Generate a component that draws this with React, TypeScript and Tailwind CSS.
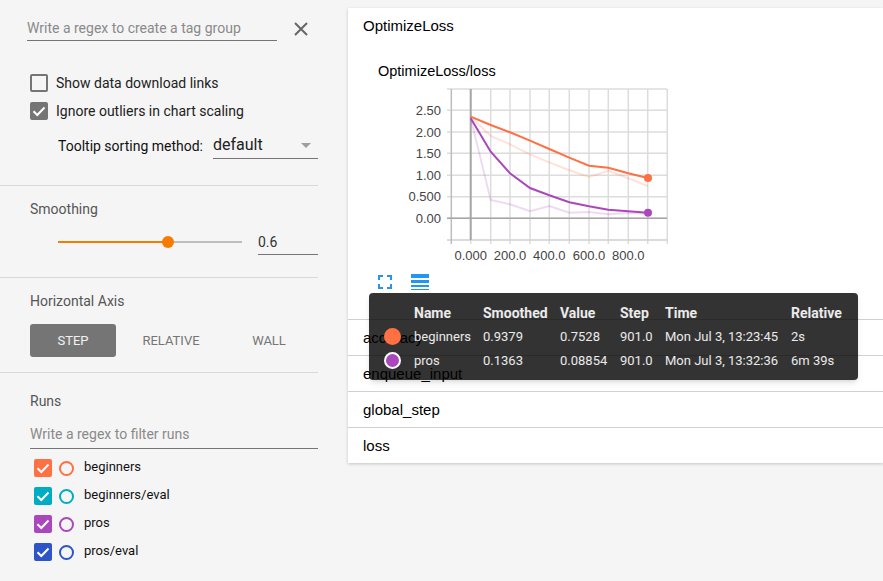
import React from 'react';

const xs = [470.7, 490.7, 510, 530, 549.3, 569.3, 589, 608.3, 628.3, 647.7];
const series = {
  smoothOrange: [116.7, 125, 132.3, 140.7, 149, 157.7, 165.7, 167.7, 173.3, 178],
  smoothPurple: [118.3, 151.7, 173.3, 188, 195.3, 202.3, 206.3, 209.7, 211.3, 212.7],
  rawOrange: [116.7, 136, 144.3, 154.3, 162.3, 170.3, 177, 170.7, 178.3, 186],
  rawPurple: [118.3, 200, 204.3, 211.3, 206, 212.7, 212, 214.3, 213, 213.7],
};

const pts = (ys: number[]) => ys.map((y, i) => `${xs[i]},${y}`).join(' ');

const yTicks = [
  { y: 110.3, label: '2.50' },
  { y: 132, label: '2.00' },
  { y: 153.3, label: '1.50' },
  { y: 175.3, label: '1.00' },
  { y: 196.7, label: '0.500' },
  { y: 218.3, label: '0.00' },
];
const xLabels = [
  { x: 470.7, label: '0.000' },
  { x: 510, label: '200.0' },
  { x: 549.3, label: '400.0' },
  { x: 589, label: '600.0' },
  { x: 628.3, label: '800.0' },
];

function Chart() {
  return (
    <svg width="280" height="177" viewBox="390 85 280 177" className="block" style={{ fontFamily: '"Liberation Sans", sans-serif' }}>
      {xs.map((x) => (
        <line key={x} x1={x} y1={89} x2={x} y2={244} stroke="#dcdcdc" strokeWidth="1.5" />
      ))}
      <line x1={667.3} y1={89} x2={667.3} y2={244} stroke="#dcdcdc" strokeWidth="1.5" />
      <line x1={447} y1={89} x2={667} y2={89} stroke="#dcdcdc" strokeWidth="1.5" />
      {yTicks.map((t) => (
        <line key={t.y} x1={447} y1={t.y} x2={667} y2={t.y} stroke="#dcdcdc" strokeWidth="1.5" />
      ))}
      <line x1={447} y1={240} x2={667} y2={240} stroke="#cfcfcf" strokeWidth="1.5" />
      <line x1={451.3} y1={89} x2={451.3} y2={244} stroke="#bdbdbd" strokeWidth="1.5" />
      <line x1={470.7} y1={89} x2={470.7} y2={240} stroke="#a6a6a6" strokeWidth="2" />
      <line x1={447} y1={218.3} x2={667} y2={218.3} stroke="#a6a6a6" strokeWidth="1.5" />

      <polyline points={pts(series.rawOrange)} fill="none" stroke="#ff7043" strokeOpacity="0.2" strokeWidth="2" />
      <polyline points={pts(series.rawPurple)} fill="none" stroke="#ab47bc" strokeOpacity="0.2" strokeWidth="2" />
      <polyline points={pts(series.smoothOrange)} fill="none" stroke="#ff7043" strokeWidth="2" />
      <polyline points={pts(series.smoothPurple)} fill="none" stroke="#ab47bc" strokeWidth="2" />
      <circle cx={648} cy={178} r="4" fill="#ff7043" />
      <circle cx={648} cy={212.7} r="4" fill="#ab47bc" />

      {yTicks.map((t) => (
        <text key={t.label} x={441} y={t.y + 4.5} textAnchor="end" fontSize="13" fill="#444">
          {t.label}
        </text>
      ))}
      {xLabels.map((t) => (
        <text key={t.label} x={t.x} y={260} textAnchor="middle" fontSize="13" fill="#444">
          {t.label}
        </text>
      ))}
    </svg>
  );
}

function Check({ className }: { className: string }) {
  return (
    <span className={`flex items-center justify-center rounded-[2px] ${className}`}>
      <svg width="16" height="16" viewBox="0 0 16 16">
        <polyline points="2.5,8.2 6.3,12 13.5,4.5" fill="none" stroke="white" strokeWidth="2" />
      </svg>
    </span>
  );
}

const runs = [
  { name: 'beginners', box: 'bg-[#ff7043]', ring: 'border-[#ff7043]' },
  { name: 'beginners/eval', box: 'bg-[#00acc1]', ring: 'border-[#00acc1]' },
  { name: 'pros', box: 'bg-[#ab47bc]', ring: 'border-[#ab47bc]' },
  { name: 'pros/eval', box: 'bg-[#2e55c8]', ring: 'border-[#2e55c8]' },
];

function Sidebar() {
  return (
    <div className="w-[348px] shrink-0 pr-[30px] text-[14px] font-['Roboto',sans-serif]">
      <div className="h-[186px] border-b border-[#d9d9d9] pt-[16px]">
        <div className="flex items-center pl-[27px]">
          <div className="w-[250px] h-[25px] border-b border-[#757575] text-[#8a8a8a] leading-[24px]">Write a regex to create a tag group</div>
          <svg width="16" height="16" viewBox="0 0 16 16" className="ml-[16px]">
            <path d="M2 2 L14 14 M14 2 L2 14" stroke="#666" strokeWidth="2" fill="none" />
          </svg>
        </div>
        <div className="mt-[33px] pl-[30px] flex flex-col gap-[10px] text-[#212121]">
          <div className="flex items-center gap-[8px] h-[18px]">
            <span className="w-[18px] h-[18px] rounded-[2px] border-2 border-[#757575]" />
            <span>Show data download links</span>
          </div>
          <div className="flex items-center gap-[8px] h-[18px]">
            <Check className="w-[18px] h-[18px] bg-[#757575]" />
            <span>Ignore outliers in chart scaling</span>
          </div>
        </div>
        <div className="mt-[13px] pl-[58px] flex items-end">
          <span className="leading-[24px] mb-[1px] text-[#111]">Tooltip sorting method:</span>
          <div className="ml-[10px] w-[105px] h-[26px] border-b border-[#757575] flex items-center justify-between text-[16px] text-[#212121]">
            <span className="mt-[-2px]">default</span>
            <span className="w-0 h-0 mr-[7px] border-x-[5px] border-x-transparent border-t-[5px] border-t-[#9e9e9e]" />
          </div>
        </div>
      </div>

      <div className="h-[92px] border-b border-[#d9d9d9] pt-[14px] pl-[30px]">
        <div className="text-[#555] leading-[18px]">Smoothing</div>
        <div className="mt-[10px] pl-[28px] flex items-center">
          <div className="relative w-[184px] h-[2px] bg-[#bdbdbd]">
            <div className="h-[2px] w-[110px] bg-[#f57c00]" />
            <div className="absolute left-[104px] top-[-5px] w-[12px] h-[12px] rounded-full bg-[#f57c00]" />
          </div>
          <div className="ml-[16px] w-[60px] h-[26px] mt-[1px] border-b border-[#757575] leading-[26px] text-[#333]">0.6</div>
        </div>
      </div>

      <div className="h-[95px] border-b border-[#d9d9d9] pt-[14px] pl-[30px]">
        <div className="text-[#555] leading-[18px]">Horizontal Axis</div>
        <div className="mt-[14px] flex items-center text-[13px] text-[#757575]">
          <div className="w-[86px] h-[33px] rounded-[3px] bg-[#757575] text-white/90 flex items-center justify-center">STEP</div>
          <div className="w-[110px] text-center">RELATIVE</div>
          <div className="w-[86px] text-center">WALL</div>
        </div>
      </div>

      <div className="pt-[19px] pl-[30px]">
        <div className="text-[#555] leading-[18px]">Runs</div>
        <div className="mt-[12px] h-[27px] border-b border-[#757575] text-[#8a8a8a] leading-[24px]">Write a regex to filter runs</div>
        <div className="mt-[10px] pl-[4px] flex flex-col gap-[10px] text-[13px] text-[#111]">
          {runs.map((r) => (
            <div key={r.name} className="flex items-center h-[18px]">
              <Check className={`w-[18px] h-[18px] ${r.box}`} />
              <span className={`ml-[7px] w-[15px] h-[15px] rounded-full border-2 ${r.ring}`} />
              <span className="ml-[10px] mt-[-3px]">{r.name}</span>
            </div>
          ))}
        </div>
      </div>
    </div>
  );
}

const cols = ['w-[69px]', 'w-[77px]', 'w-[60px]', 'w-[45px]', 'w-[126px]', 'w-[60px]'];
const rows = [
  { dot: 'bg-[#ff7043]', cells: ['beginners', '0.9379', '0.7528', '901.0', 'Mon Jul 3, 13:23:45', '2s'] },
  { dot: 'bg-[#ab47bc] border-2 border-white', cells: ['pros', '0.1363', '0.08854', '901.0', 'Mon Jul 3, 13:32:36', '6m 39s'] },
];

function Tooltip() {
  return (
    <div className="absolute left-[21px] top-[293px] w-[489px] h-[87px] rounded-[4px] bg-black/80 shadow-md text-[13px] text-white/90 font-['Roboto',sans-serif] pt-[8px] pl-[15px]">
      <div className="flex items-center h-[24px] font-bold text-[14px] text-white/90">
        <span className="w-[30px]" />
        {['Name', 'Smoothed', 'Value', 'Step', 'Time', 'Relative'].map((h, i) => (
          <span key={h} className={`${cols[i]} shrink-0`}>{h}</span>
        ))}
      </div>
      {rows.map((r) => (
        <div key={r.cells[0]} className="flex items-center h-[23.5px]">
          <span className={`w-[17px] h-[17px] mr-[13px] rounded-full ${r.dot}`} />
          {r.cells.map((c, i) => (
            <span key={i} className={`${cols[i]} shrink-0`}>{c}</span>
          ))}
        </div>
      ))}
    </div>
  );
}

export default function App() {
  return (
    <div className="flex w-[883px] h-[581px] overflow-hidden bg-[#f5f5f5]">
      <Sidebar />
      <div className="relative flex-1 pt-[8px] font-['Liberation_Sans',sans-serif] text-[15px] text-black">
        <div className="bg-white shadow-[0_1px_3px_rgba(0,0,0,0.2)]">
          <div className="h-[35px] flex items-center pl-[15px] pt-[2px]">OptimizeLoss</div>
          <div className="h-[277px] border-b border-[#d0d0d0]">
            <div className="pl-[30px] pt-[16px] leading-[24px] text-[14.5px]">OptimizeLoss/loss</div>
            <div className="ml-[42px] mt-[2px]">
              <Chart />
            </div>
            <div className="flex items-start pl-[30px] mt-[13px]">
              <svg width="14" height="14" viewBox="0 0 14 14" fill="none" stroke="#2196f3" strokeWidth="2">
                <path d="M1 5 V1 H5 M9 1 H13 V5 M13 9 V13 H9 M5 13 H1 V9" />
              </svg>
              <svg width="18" height="16" viewBox="0 0 18 16" fill="#2196f3" className="ml-[19px] mt-[-1px]">
                <rect x="0" y="0" width="18" height="4" />
                <rect x="0" y="6" width="18" height="3" />
                <rect x="0" y="11" width="18" height="2" />
                <rect x="0" y="15" width="18" height="1" />
              </svg>
            </div>
          </div>
          {['accuracy', 'enqueue_input', 'global_step'].map((t) => (
            <div key={t} className="h-[36px] flex items-center pl-[15px] pt-[2px] border-b border-[#d0d0d0]">
              {t}
            </div>
          ))}
          <div className="h-[35px] flex items-center pl-[15px] pt-[2px]">loss</div>
        </div>
        <Tooltip />
      </div>
    </div>
  );
}
